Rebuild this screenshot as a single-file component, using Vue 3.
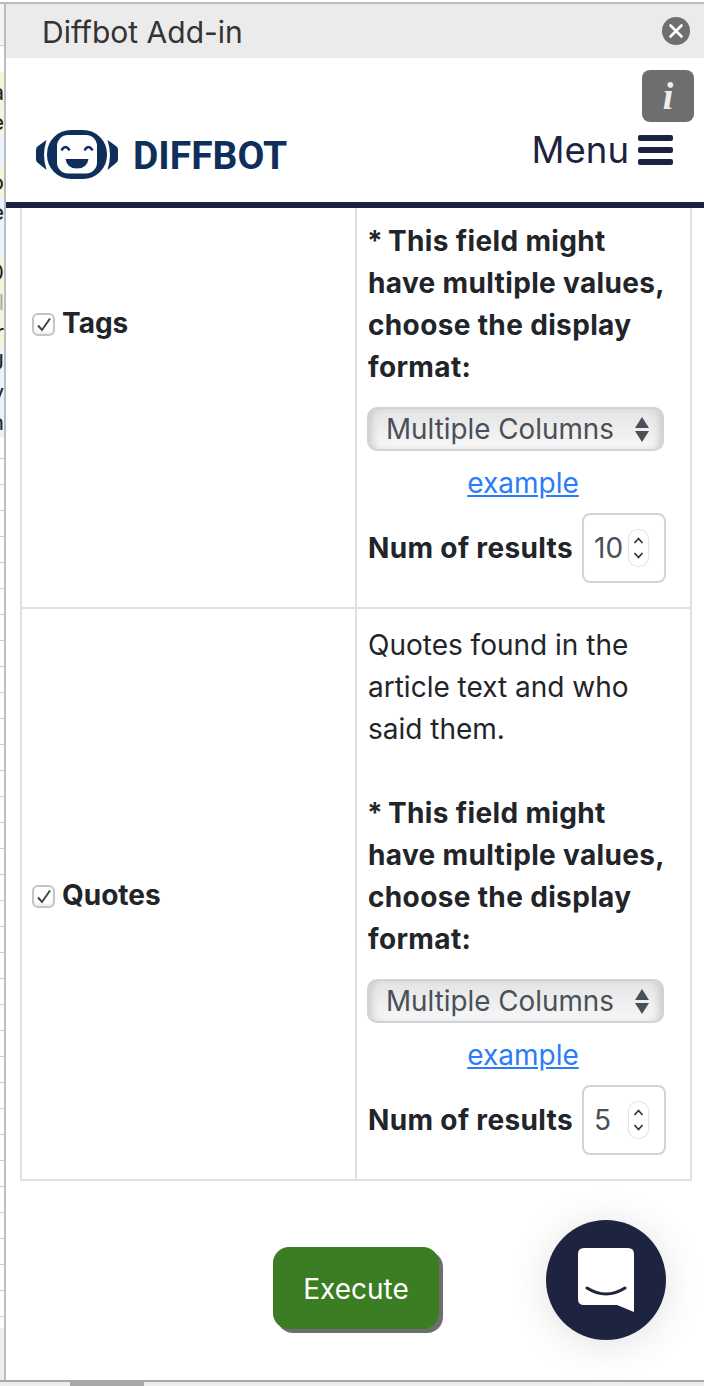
<script setup>
const ticks = Array.from({ length: 34 }, (_, i) => i)
const cells = [
  { t: 'a', k: 'y' }, { t: 'e', k: 'y' }, { t: '', k: 'b' }, { t: 'o', k: 'y' },
  { t: 'e', k: 'b' }, { t: '', k: 'b' }, { t: '0', k: 'y' }, { t: 'l', k: 'y faint' },
  { t: 'r', k: 'y' }, { t: 'U', k: 'b' }, { t: 'v', k: 'b' }, { t: 'n', k: 'b' },
]
const rows = [
  { name: 'Tags', desc: [], value: '10', cut: true },
  { name: 'Quotes', desc: ['Quotes found in the', 'article text and who', 'said them.'], value: '5', cut: false },
]
</script>

<template>
  <div class="window">
    <aside class="sheet">
      <div class="sheet-top"></div>
      <div class="sheet-gap"></div>
      <div class="sheet-cells">
        <span v-for="(c, i) in cells" :key="i" class="c" :class="c.k">{{ c.t }}</span>
      </div>
      <div class="sheet-rows">
        <i v-for="t in ticks" :key="t"></i>
      </div>
      <div class="sheet-bottom"></div>
    </aside>
    <main class="pane">
      <header class="title">
        <span class="title-text">Diffbot Add-in</span>
        <svg class="close" width="28" height="28" viewBox="0 0 28 28">
          <circle cx="14" cy="14" r="14" fill="#6f6f6f" />
          <path d="M8.500 8.500 19.500 19.500M19.500 8.500 8.500 19.500" stroke="#fff" stroke-width="2.600" stroke-linecap="round" />
        </svg>
      </header>
      <nav class="brand">
        <div class="logo">
          <svg width="82" height="49" viewBox="0 0 82 49">
            <path d="M10.500 10 2 16Q0 17.500 0 19.500V29.500Q0 31.500 2 33L10.500 40Q8 32 8 25T10.500 10Z" fill="#0f2f5b" />
            <path d="M71.500 10 80 16Q82 17.500 82 19.500V29.500Q82 31.500 80 33L71.500 40Q74 32 74 25T71.500 10Z" fill="#0f2f5b" />
            <rect x="11" y="0" width="60" height="49" rx="24" fill="#0f2f5b" />
            <rect x="21" y="5" width="40" height="38.500" rx="11" fill="#fff" />
            <path d="M26 19.500Q29.500 14.500 33 19.500M49 19.500Q52.500 14.500 56 19.500" fill="none" stroke="#0f2f5b" stroke-width="2.600" stroke-linecap="round" />
            <path d="M29.500 29H52.500Q51 38.500 41 38.500T29.500 29Z" fill="#0f2f5b" />
          </svg>
          <span class="wordmark">DIFFBOT</span>
        </div>
        <div class="info"><span>i</span></div>
        <div class="menu">
          <span>Menu</span>
          <span class="burger"><i></i><i></i><i></i></span>
        </div>
      </nav>
      <div class="table">
        <div v-for="row in rows" :key="row.name" class="row" :class="{ cut: row.cut }">
          <div class="cell left">
            <span class="check">
              <svg width="16" height="15" viewBox="0 0 16 15"><path d="M2 8.500 6 13 14 1.500" fill="none" stroke="#444" stroke-width="2" /></svg>
            </span>
            <b>{{ row.name }}</b>
          </div>
          <div class="cell right">
            <p v-if="row.desc.length" class="desc">
              <span v-for="line in row.desc" :key="line">{{ line }}</span>
            </p>
            <p class="note"><span class="star">*</span> This field might<br />have multiple values,<br />choose the display<br />format:</p>
            <div class="select">
              <span>Multiple Columns</span>
              <svg width="14" height="25" viewBox="0 0 14 25"><path d="M7 0 14 11H0ZM7 25 0 14H14Z" fill="#495057" /></svg>
            </div>
            <a class="example">example</a>
            <div class="num">
              <b>Num of results</b>
              <div class="input">
                <span>{{ row.value }}</span>
                <span class="spin">
                  <svg width="19" height="36" viewBox="0 0 19 36"><path d="M5.500 13 9.500 8.500 13.500 13M5.500 23 9.500 27.500 13.500 23" fill="none" stroke="#333" stroke-width="1.700" /></svg>
                </span>
              </div>
            </div>
          </div>
        </div>
      </div>
      <div class="actions">
        <button class="execute">Execute</button>
        <div class="chat">
          <svg width="56" height="64" viewBox="0 0 56 64">
            <path d="M6 0H50Q56 0 56 6V64L39 57H6Q0 57 0 51V6Q0 0 6 0Z" fill="#fff" />
            <path d="M9 40Q28 52 47 40" fill="none" stroke="#1e2440" stroke-width="3" stroke-linecap="round" />
          </svg>
        </div>
      </div>
    </main>
    <footer class="scroll"><i></i></footer>
  </div>
</template>

<style>
html, body { margin: 0; background: #fff; }
</style>

<style scoped>
.window {
  width: 704px;
  height: 1386px;
  box-sizing: border-box;
  padding-top: 2px;
  display: grid;
  grid-template-columns: 6px 698px;
  grid-template-rows: 1378px 6px;
  overflow: hidden;
  font-family: Inter, "Liberation Sans", sans-serif;
  color: #212529;
  background: #fff;
}
.sheet {
  grid-row: 1;
  border-right: 2px solid #bdbdbd;
  border-top: 2px solid #bdbdbd;
  box-sizing: border-box;
  display: flex;
  flex-direction: column;
  overflow: hidden;
  font-size: 22px;
  color: #222;
}
.sheet-top { height: 42px; flex: none; background: #f3f3f3; border-bottom: 1px solid #cfcfcf; box-sizing: border-box; }
.sheet-gap { height: 26px; flex: none; }
.sheet-cells { display: flex; flex-direction: column; flex: none; }
.c { height: 30px; line-height: 30px; width: 4px; overflow: hidden; display: block; direction: rtl; flex: none; }
.c:first-child { padding-top: 5px; }
.y { background: #f7f4dc; }
.b { background: #eaf3fa; }
.faint { color: #aaa; }
.sheet-rows { flex: none; display: flex; flex-direction: column; margin-top: -4px; }
.sheet-rows i { display: block; height: 26px; box-sizing: border-box; flex: none; border-bottom: 1px solid #cccccc; }
.sheet-bottom { flex: 1; margin-top: 11px; background: #eeeeee; }
.pane {
  grid-row: 1;
  display: flex;
  flex-direction: column;
  border-top: 2px solid #bdbdbd;
  min-width: 0;
  overflow: hidden;
  position: relative;
}
.title {
  height: 54px;
  flex: none;
  background: #ebebeb;
  box-sizing: border-box;
  padding: 0 14px 0 36px;
  display: flex;
  align-items: center;
  justify-content: space-between;
  font-size: 30px;
  color: #333;
}
.title-text { padding-top: 2px; }
.brand {
  height: 150px;
  flex: none;
  box-sizing: border-box;
  border-bottom: 6px solid #1c2340;
  position: relative;
  display: flex;
  align-items: flex-end;
  justify-content: space-between;
  padding: 0 31px 23px 30px;
}
.logo { display: flex; align-items: center; gap: 15px; }
.wordmark {
  font-family: Roboto, "Liberation Sans", sans-serif;
  font-weight: 700;
  font-size: 39px;
  line-height: 40px;
  margin-top: 3px;
  color: #0f2f5b;
}
.info {
  position: absolute;
  top: 12px;
  right: 10px;
  width: 52px;
  height: 52px;
  border-radius: 8px;
  background: #6e6e6e;
  display: flex;
  align-items: center;
  justify-content: center;
  color: #eee;
  font: italic 700 38px "Liberation Serif", serif;
}
.menu { display: flex; align-items: center; gap: 9px; font-size: 36.500px; color: #1c2340; margin-bottom: 7px; }
.burger { display: flex; flex-direction: column; gap: 6px; width: 35px; margin-top: -1px; }
.burger i { display: block; height: 6px; border-radius: 2px; background: #1c2340; }
.table {
  margin: 0 12px 0 14px;
  border: 2px solid #dee2e6;
  border-top: 0;
}
.row { display: grid; grid-template-columns: 333px 1fr; }
.row + .row { border-top: 2px solid #dee2e6; }
.cell { box-sizing: border-box; }
.left { display: flex; align-items: center; gap: 7px; padding: 2px 0 0 10px; font-size: 28px; }
.cut .left { padding-bottom: 172px; }
.check {
  width: 23px;
  height: 23px;
  flex: none;
  box-sizing: border-box;
  border: 2px solid #c4c4c4;
  border-radius: 6px;
  display: flex;
  align-items: center;
  justify-content: center;
  margin-top: 3px;
  box-shadow: inset 0 -2px 2px #eee;
}
.right { border-left: 2px solid #dee2e6; padding: 15px 11px 24px 10px; font-size: 28px; line-height: 42px; }
.cut .right { padding-top: 12px; }
p { margin: 0; padding-left: 1px; }
.desc { margin-bottom: 42px; }
.desc span { display: block; }
.note, .num b { font-weight: 700; letter-spacing: 0.35px; }
.star { margin: 0 -2px 0 -1px; }
.select {
  margin-top: 19px;
  width: 297px;
  height: 44px;
  box-sizing: border-box;
  border: 2px solid #ced4da;
  border-radius: 10px;
  background: linear-gradient(#e4e4e4, #f7f7f7);
  box-shadow: inset 7px 0 8px -5px #c4c4c4, inset -7px 0 8px -5px #c4c4c4;
  display: flex;
  align-items: center;
  justify-content: space-between;
  padding: 0 13px 0 17px;
  color: #495057;
  font-size: 27.800px;
}
.example {
  display: block;
  text-align: center;
  margin-top: 11px;
  color: #2b7df6;
  text-decoration: underline;
}
.num { display: flex; align-items: center; gap: 8px; margin-top: 9px; padding-left: 1px; }
.num b { flex: none; min-width: 206px; }
.input {
  width: 84px;
  height: 70px;
  flex: none;
  box-sizing: border-box;
  border: 2px solid #ced4da;
  border-radius: 8px;
  display: flex;
  align-items: center;
  justify-content: space-between;
  padding: 0 16px 0 10px;
  color: #495057;
}
.spin {
  width: 19px;
  height: 36px;
  flex: none;
  border-radius: 9px;
  box-sizing: border-box;
  box-shadow: 0 0 1px 1px #e2e2e2;
  display: flex;
  align-items: center;
  justify-content: center;
}
.actions { flex: 1; position: relative; display: flex; justify-content: center; padding-top: 66px; }
.execute {
  width: 166px;
  height: 82px;
  margin-left: 2px;
  padding-top: 2px;
  border: 0;
  border-radius: 16px;
  background: #3a7d22;
  color: #fff;
  font: 28px Inter, sans-serif;
  box-shadow: 4px 4px 0 #6e6e6e;
}
.chat {
  position: absolute;
  right: 38px;
  top: 39px;
  width: 120px;
  height: 120px;
  border-radius: 50%;
  background: #1e2440;
  box-shadow: 0 4px 40px rgba(0, 0, 0, 0.12);
  display: flex;
  align-items: center;
  justify-content: center;
}
.scroll {
  grid-column: 1 / 3;
  grid-row: 2;
  background: #ededed;
  border-top: 2px solid #a8a8a8;
  box-sizing: border-box;
}
.scroll i { display: block; margin-left: 70px; width: 74px; height: 4px; background: #a8a8a8; }
</style>
